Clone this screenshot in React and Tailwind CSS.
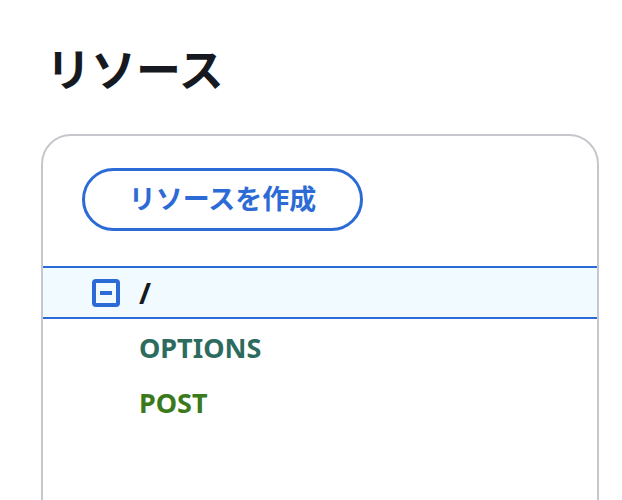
export default function App() {
  const font = { fontFamily: '"Noto Sans", "Noto Sans CJK JP", sans-serif' };
  return (
    <div className="h-screen bg-white text-[#16191f] overflow-hidden" style={font}>
      <div className="pl-[46px] pt-[42px]">
        <h1 className="text-[45px] leading-[56px] font-bold">リソース</h1>
      </div>

      <div className="ml-[41px] mt-[36px] w-[558px] h-[400px] border-2 border-[#c6c6cd] rounded-[30px]">
        <div className="pl-[39px] pt-[32px]">
          <button className="h-[63px] w-[281px] rounded-full border-[3px] border-[#2c6bd6] text-[#2c6bd6] text-[27px] font-bold flex items-center justify-center">
            リソースを作成
          </button>
        </div>

        <div className="mt-[35px]">
          <div className="h-[53px] bg-[#f1fafe] border-y-2 border-[#2c6bd6] flex items-center pl-[49px]">
            <span className="w-[28px] h-[28px] rounded-[4px] border-[4px] border-[#2c6bd6] flex items-center justify-center">
              <span className="w-[12px] h-[4px] bg-[#2c6bd6]"></span>
            </span>
            <span className="ml-[19px] text-[29px] font-bold leading-none">/</span>
          </div>
          <div className="h-[56px] pt-[2px] flex items-center pl-[96px] text-[27px] font-bold text-[#2d6b5f]">
            OPTIONS
          </div>
          <div className="h-[56px] flex items-center pl-[96px] text-[27px] font-bold text-[#3a7a1d]">
            POST
          </div>
        </div>
      </div>
    </div>
  );
}
